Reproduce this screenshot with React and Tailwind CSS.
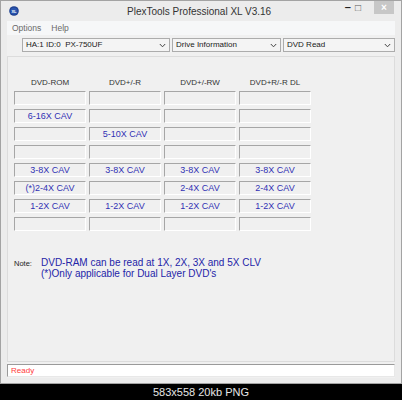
import React from "react";

const headers = ["DVD-ROM", "DVD+/-R", "DVD+/-RW", "DVD+R/-R DL"];

const rows = [
  ["", "", "", ""],
  ["6-16X CAV", "", "", ""],
  ["", "5-10X CAV", "", ""],
  ["", "", "", ""],
  ["3-8X CAV", "3-8X CAV", "3-8X CAV", "3-8X CAV"],
  ["(*)2-4X CAV", "", "2-4X CAV", "2-4X CAV"],
  ["1-2X CAV", "1-2X CAV", "1-2X CAV", "1-2X CAV"],
  ["", "", "", ""],
];

function Chevron() {
  return (
    <svg width="7" height="5" viewBox="0 0 7 5" className="shrink-0">
      <polyline points="0.8,1 3.5,3.8 6.2,1" fill="none" stroke="#444" strokeWidth="1" />
    </svg>
  );
}

function Select({ label, width }) {
  return (
    <div
      className="h-[14px] flex items-center justify-between pl-[3px] pr-[3px] border border-[#acacac] bg-[#f4f4f4] text-[8px] text-[#1a1a1a]"
      style={{ width }}
    >
      <span className="whitespace-pre">{label}</span>
      <Chevron />
    </div>
  );
}

function Cell({ text }) {
  return (
    <div className="h-[14px] flex items-center justify-center border border-t-[#a6a6a6] border-l-[#a6a6a6] border-b-white border-r-white bg-[#f0f0f0] text-[9px] text-[#3131b4] leading-none">
      {text}
    </div>
  );
}

export default function App() {
  return (
    <div
      className="w-[402px] h-[400px] bg-black flex flex-col"
      style={{ fontFamily: '"Liberation Sans", Arial, sans-serif' }}
    >
      <div className="h-[384px] bg-[#ececec] border border-[#a3a3a3] flex flex-col px-[6px]">
        {/* title bar */}
        <div className="h-[20px] flex items-center shrink-0">
          <div className="w-[120px] flex items-center pl-[2px]">
            <svg width="10" height="10" viewBox="0 0 10 10">
              <circle cx="5" cy="5" r="4.8" fill="#1d3f8f" />
              <circle cx="5" cy="5" r="3.6" fill="#2a55b0" />
              <text x="5" y="6.6" fontSize="4" fill="#fff" textAnchor="middle" fontWeight="bold">
                XL
              </text>
            </svg>
          </div>
          <div className="flex-1 text-[10px] text-[#333]">PlexTools Professional XL V3.16</div>
          <div className="flex self-start items-center h-[13px] mr-[1px]">
            <span className="text-[11px] leading-none text-[#222] mr-[4px] font-bold">–</span>
            <span className="text-[10px] leading-none text-[#555] mr-[13px]">□</span>
            <div className="w-[20px] h-[13px] bg-[#c7c7c7] flex items-center justify-center text-[10px] leading-none text-white font-bold">
              ×
            </div>
          </div>
        </div>

        {/* client */}
        <div className="flex-1 flex flex-col bg-[#f0f0f0]">
          <div className="h-[14px] bg-[#f6f7f8] flex items-center gap-[10px] pl-[5px] text-[8.5px] text-[#6a6a6a] shrink-0">
            <span>Options</span>
            <span>Help</span>
          </div>

          <div className="flex gap-[2px] mt-[3px] pl-[15px] shrink-0">
            <Select label="HA:1 ID:0  PX-750UF" width="148px" />
            <Select label="Drive Information" width="109px" />
            <Select label="DVD Read" width="112px" />
          </div>

          <div className="mt-[4px] h-[306px] border border-[#dcdcdc] flex flex-col pl-[6px] pt-[21px] shrink-0">
            <div className="grid grid-cols-[72px_72px_72px_72px] gap-x-[3px]">
              {headers.map((h) => (
                <div key={h} className="h-[10px] text-center text-[8px] text-[#333] leading-[10px]">
                  {h}
                </div>
              ))}
            </div>
            <div className="grid grid-cols-[72px_72px_72px_72px] gap-x-[3px] gap-y-[4px] mt-[3px]">
              {rows.flatMap((r, i) => r.map((t, j) => <Cell key={i + "-" + j} text={t} />))}
            </div>

            <div className="mt-[26px] flex text-[10px] leading-[11px]">
              <div className="w-[27px] text-[7.5px] text-[#222] pt-[1px]">Note:</div>
              <div className="text-[#2424a8]">
                <div>DVD-RAM can be read at 1X, 2X, 3X and 5X CLV</div>
                <div>(*)Only applicable for Dual Layer DVD's</div>
              </div>
            </div>
          </div>

          <div className="mt-[2px] h-[13px] bg-white border border-t-[#9a9a9a] border-l-[#9a9a9a] border-b-[#e8e8e8] border-r-[#e8e8e8] flex items-center pl-[3px] text-[8px] text-[#ff3b3b] shrink-0">
            Ready
          </div>
        </div>
        <div className="h-[5px] shrink-0" />
      </div>

      <div className="flex-1 flex items-center justify-center text-[11px] text-[#e6e6e6]">
        583x558 20kb PNG
      </div>
    </div>
  );
}
